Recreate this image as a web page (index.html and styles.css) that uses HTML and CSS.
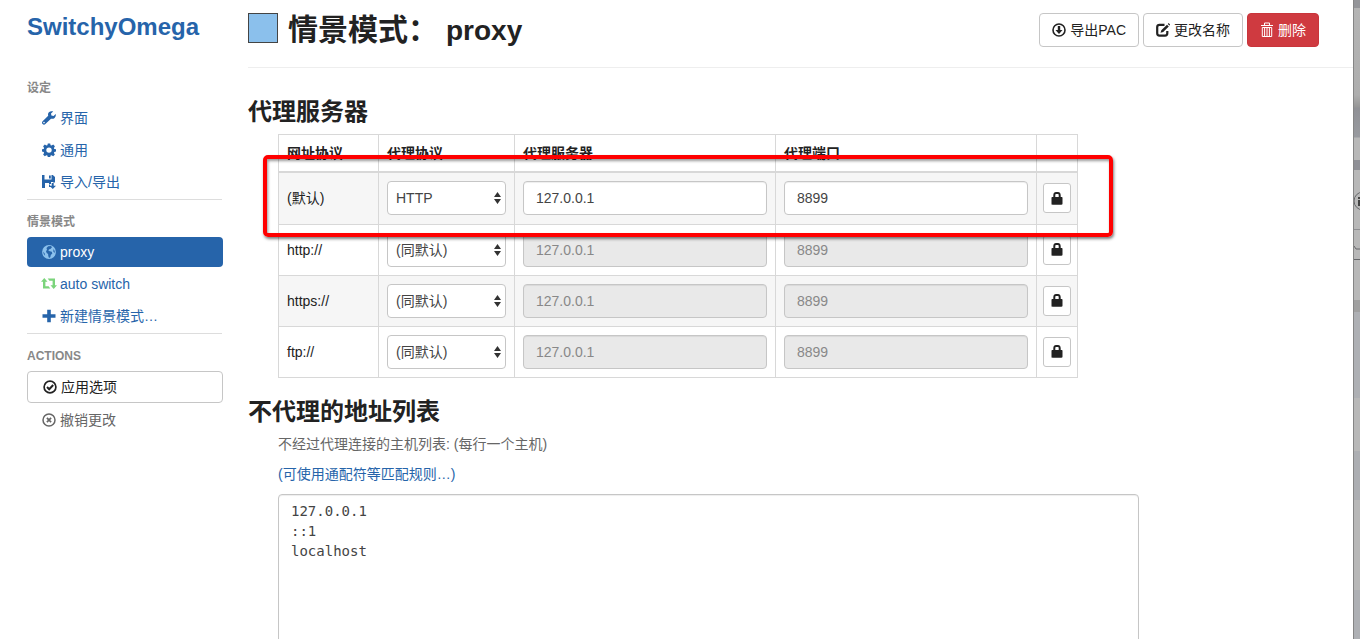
FILE: index.html
```html
<!DOCTYPE html>
<html lang="zh-CN">
<head>
<meta charset="UTF-8">
<meta name="viewport" content="width=device-width, initial-scale=1">
<title>SwitchyOmega</title>
<link rel="stylesheet" href="styles.css">
</head>
<body>

<svg class="sprite" aria-hidden="true">
  <symbol id="i-wrench" viewBox="0 0 14 14"><path d="M13.7 3.1 11.6 5 9.4 4.5 9 2.6 11.2.5C9.7-.2 8 .1 6.9 1.3c-.9 1-1.1 2.3-.7 3.5L.6 10.300c-.8.8-.8 2 0 2.800.8.8 2 .8 2.800 0L9 7.700c1.200.4 2.600.1 3.600-.8 1.100-1.100 1.500-2.500 1.100-3.800zM2 12.400a.8.8 0 1 1 0-1.600.8.8 0 0 1 0 1.600z"/></symbol>
  <symbol id="i-cog" viewBox="0 0 14 14"><path fill-rule="evenodd" d="M5.800.4h2.400l.4 1.800 1 .4 1.600-1 1.700 1.700-1 1.600.4 1 1.700.4v2.200l-1.700.4-.4 1 1 1.600-1.700 1.700-1.600-1-1 .4-.4 1.600H5.800l-.4-1.600-1-.4-1.600 1-1.700-1.700 1-1.600-.4-1L0 8.500V6.300l1.700-.4.4-1-1-1.600 1.700-1.700 1.600 1 1-.4zM7 4.400a2.700 2.700 0 1 0 0 5.400 2.700 2.700 0 0 0 0-5.400z"/></symbol>
  <symbol id="i-save" viewBox="0 0 14 14"><path d="M0 0h2.500v4.500h7V0h1.300L13 2v5.500h-2V7H9v2H7.200l1 1.500V12H7V8H3v5H0zM7 .5h1.800v3H7zM9.700 8h2v2.800H14L10.800 14 7.500 10.800h2.200z"/></symbol>
  <symbol id="i-globe" viewBox="0 0 14 14"><circle cx="7" cy="7" r="6.900"/><path fill="#2664aa" d="M6.200 1.200 9 1l1 1.200-1.600 1.900-1.200.2-.9 1.300 1.500.7 2 .5.500 1.600-1.500 1.600-.5 2.300-1.300.6-.7-2-.2-1.900-1.400-1L4 6.300l1-1.600L4.500 3zM11.400 4l1.300 2v2l-1.300-1.300zM1.200 6.500l1.500 2 .4 2.200L1.700 9z"/></symbol>
  <symbol id="i-retweet" viewBox="0 0 16 14"><path d="M3.300 1 6.500 4.800H4.400v4.400h3.200L9.300 11.500H2V4.800H0zM6.700 1.500H14v6.700h2L12.700 12 9.500 8.200h2.100V3.800H8.400z"/></symbol>
  <symbol id="i-plus" viewBox="0 0 14 14"><path d="M5.200.7h3.600v4.500h4.700v3.600H8.800v4.500H5.200V8.800H.5V5.200h4.700z"/></symbol>
  <symbol id="i-ok" viewBox="0 0 14 14"><g fill="none" stroke="currentColor"><circle cx="7" cy="7" r="5.900" stroke-width="1.700"/><path d="m4 7 2.200 2.200L10.200 5" stroke-width="2"/></g></symbol>
  <symbol id="i-remove" viewBox="0 0 14 14"><g fill="none" stroke="currentColor"><circle cx="7" cy="7" r="6" stroke-width="1.500"/><path d="m4.900 4.900 4.200 4.200m0-4.200L4.900 9.100" stroke-width="1.700"/></g></symbol>
  <symbol id="i-download" viewBox="0 0 14 14"><circle cx="7" cy="7" r="6" fill="none" stroke="currentColor" stroke-width="1.600"/><path d="M5.800 3h2.400v4h2.300L7 11 3.500 7h2.300z"/></symbol>
  <symbol id="i-edit" viewBox="0 0 14 14"><path d="M8.500 1.800H3.500A2.300 2.300 0 0 0 1.200 4v6.300a2.300 2.300 0 0 0 2.300 2.300H9a2.300 2.300 0 0 0 2.300-2.300V8" fill="none" stroke="currentColor" stroke-width="2.200"/><path d="M11 1.800 12.800 3.500 7.200 9 4.500 9.800 5.300 7.200zM11.800 1l.9-.9 1.500 1.600-.8.900z"/></symbol>
  <symbol id="i-trash" viewBox="0 0 14 16"><path fill="none" stroke="currentColor" d="M1 3.500h12M4.500 3V1h5v2M2.300 5.500V14.500h9.400V5.500zM4.600 6v8M7 6v8M9.400 6v8"/></symbol>
  <symbol id="i-lock" viewBox="0 0 12 13"><path fill-rule="evenodd" d="M2.300 5V3.200C2.300 1.200 3.500 0 5 0h2c1.500 0 2.700 1.200 2.700 3.200V5h.8c.8 0 1 .4 1 1v5.500c0 .8-.4 1.200-1 1.200h-9c-.7 0-1-.4-1-1.200V6c0-.6.300-1 1-1zM4.300 5h3.400V3.300C7.700 2.500 7.400 2 6.700 2H5.300c-.7 0-1 .5-1 1.300z"/></symbol>
</svg>

<div class="app">
  <nav class="sidebar">
    <h1 class="brand">SwitchyOmega</h1>
    <ul class="nav">
      <li class="nav-header">设定</li>
      <li><a href="#ui"><svg class="icon"><use href="#i-wrench"/></svg>界面</a></li>
      <li><a href="#general"><svg class="icon"><use href="#i-cog"/></svg>通用</a></li>
      <li><a href="#io"><svg class="icon"><use href="#i-save"/></svg>导入/导出</a></li>
      <li class="divider"></li>
      <li class="nav-header">情景模式</li>
      <li class="active"><a href="#proxy"><svg class="icon icon-blue"><use href="#i-globe"/></svg>proxy</a></li>
      <li><a href="#auto-switch"><svg class="icon icon-green"><use href="#i-retweet"/></svg>auto switch</a></li>
      <li><a href="#new-profile"><svg class="icon"><use href="#i-plus"/></svg>新建情景模式…</a></li>
      <li class="divider"></li>
      <li class="nav-header">ACTIONS</li>
      <li><button type="button" class="btn btn-apply"><svg class="icon"><use href="#i-ok"/></svg>应用选项</button></li>
      <li class="muted"><a href="#discard"><svg class="icon"><use href="#i-remove"/></svg>撤销更改</a></li>
    </ul>
  </nav>

  <main class="content">
    <header class="page-header">
      <span class="color-box"></span>
      <h2 class="title">情景模式：<span class="profile-name">proxy</span></h2>
      <div class="actions">
        <button type="button" class="btn"><svg class="icon"><use href="#i-download"/></svg>导出PAC</button>
        <button type="button" class="btn"><svg class="icon"><use href="#i-edit"/></svg>更改名称</button>
        <button type="button" class="btn btn-danger"><svg class="icon icon-trash"><use href="#i-trash"/></svg>删除</button>
      </div>
    </header>

    <section>
      <h3>代理服务器</h3>
      <div class="servers">
        <table>
          <thead>
            <tr>
              <th class="col-scheme">网址协议</th>
              <th class="col-protocol">代理协议</th>
              <th>代理服务器</th>
              <th>代理端口</th>
              <th class="col-auth"></th>
            </tr>
          </thead>
          <tbody>
            <tr>
              <td>(默认)</td>
              <td><div class="select"><select aria-label="代理协议"><option>HTTP</option></select><svg viewBox="0 0 7 12"><path d="M3.500 0 7 5H0zM0 7h7L3.500 12z"/></svg></div></td>
              <td><input type="text" class="field" aria-label="代理服务器" value="127.0.0.1"></td>
              <td><input type="text" class="field" aria-label="代理端口" value="8899"></td>
              <td><button type="button" class="btn btn-lock" aria-label="代理登录"><svg><use href="#i-lock"/></svg></button></td>
            </tr>
            <tr>
              <td>http://</td>
              <td><div class="select"><select aria-label="代理协议"><option>(同默认)</option></select><svg viewBox="0 0 7 12"><path d="M3.500 0 7 5H0zM0 7h7L3.500 12z"/></svg></div></td>
              <td><input type="text" class="field" aria-label="代理服务器" value="127.0.0.1" disabled></td>
              <td><input type="text" class="field" aria-label="代理端口" value="8899" disabled></td>
              <td><button type="button" class="btn btn-lock" aria-label="代理登录"><svg><use href="#i-lock"/></svg></button></td>
            </tr>
            <tr>
              <td>https://</td>
              <td><div class="select"><select aria-label="代理协议"><option>(同默认)</option></select><svg viewBox="0 0 7 12"><path d="M3.500 0 7 5H0zM0 7h7L3.500 12z"/></svg></div></td>
              <td><input type="text" class="field" aria-label="代理服务器" value="127.0.0.1" disabled></td>
              <td><input type="text" class="field" aria-label="代理端口" value="8899" disabled></td>
              <td><button type="button" class="btn btn-lock" aria-label="代理登录"><svg><use href="#i-lock"/></svg></button></td>
            </tr>
            <tr>
              <td>ftp://</td>
              <td><div class="select"><select aria-label="代理协议"><option>(同默认)</option></select><svg viewBox="0 0 7 12"><path d="M3.500 0 7 5H0zM0 7h7L3.500 12z"/></svg></div></td>
              <td><input type="text" class="field" aria-label="代理服务器" value="127.0.0.1" disabled></td>
              <td><input type="text" class="field" aria-label="代理端口" value="8899" disabled></td>
              <td><button type="button" class="btn btn-lock" aria-label="代理登录"><svg><use href="#i-lock"/></svg></button></td>
            </tr>
          </tbody>
        </table>
        <div class="highlight"></div>
      </div>
    </section>

    <section>
      <h3>不代理的地址列表</h3>
      <div class="bypass">
        <label class="help" for="bypassList">不经过代理连接的主机列表: (每行一个主机)</label>
        <p><a href="#rules">(可使用通配符等匹配规则…)</a></p>
        <textarea id="bypassList" rows="10" spellcheck="false">127.0.0.1
::1
localhost</textarea>
      </div>
    </section>
  </main>

  <div class="backdrop">
    <svg class="backdrop-lines"><g fill="none" stroke="#66676a"><circle cx="9" cy="201" r="9"/><path d="M0 229.500h6" stroke="#8f8f92"/><path d="M0 246l2 3h4M0 259.500h6"/></g><path fill="#444" d="M4 197h2v2H4zM4 200h2v6H4z"/></svg>
  </div>
</div>

</body>
</html>
```
FILE: styles.css
```css
* {
  box-sizing: border-box;
}

html, body {
  height: 100%;
  margin: 0;
  overflow: hidden;
}

body {
  font: 14px/20px "Liberation Sans", "Noto Sans CJK SC", sans-serif;
  color: #222;
  background: #fff;
}

a {
  color: #2664aa;
  text-decoration: none;
}

h1, h2, h3, p, ul {
  margin: 0;
  padding: 0;
}

svg {
  fill: currentColor;
}

.sprite {
  display: none;
}

.app {
  display: flex;
  height: 100%;
}

/* sidebar */
.sidebar {
  flex: none;
  width: 248px;
  padding: 12px 25px 0 27px;
}

.brand {
  font-size: 24px;
  line-height: 30px;
  color: #2664aa;
  margin-bottom: 31px;
}

.nav {
  list-style: none;
}

.nav-header {
  padding: 5px 0;
  font-size: 12px;
  font-weight: bold;
  color: #888;
}

.nav a {
  display: flex;
  align-items: center;
  height: 30px;
  margin-bottom: 2px;
  padding: 0 15px;
  border-radius: 4px;
}

.nav .active a {
  background: #2664aa;
  color: #fff;
}

.nav .muted a {
  color: #666;
}

.divider {
  height: 1px;
  margin: 0 1px 7px 0;
  background: #ddd;
}

.icon {
  flex: none;
  width: 14px;
  height: 14px;
  margin-right: 4px;
}

.nav .icon-blue {
  color: #8bc0ec;
}

.nav .icon-green {
  width: 16px;
  margin: 0 3px 0 -1px;
  color: #7bd47b;
}

/* buttons */
.btn {
  display: inline-flex;
  align-items: center;
  height: 34px;
  padding: 0 12px;
  border: 1px solid #c6c6c6;
  border-radius: 4px;
  background: #fff;
  color: #222;
  font: inherit;
}

.btn-danger {
  border-color: #c9353b;
  background: #cf3a40;
  color: #fff;
}

.icon-trash {
  height: 16px;
}

.btn-apply {
  width: 100%;
  height: 32px;
  margin-bottom: 2px;
  padding: 0 15px;
}

.btn-lock {
  justify-content: center;
  width: 28px;
  height: 30px;
  padding: 0;
  border-radius: 3px;
  vertical-align: middle;
}

.btn-lock svg {
  width: 12px;
  height: 13px;
}

/* content */
.content {
  flex: 1;
  min-width: 0;
}

.page-header {
  display: flex;
  align-items: flex-start;
  height: 68px;
  padding: 13px 34px 0 0;
  margin-bottom: 30px;
  border-bottom: 1px solid #eee;
}

.color-box {
  width: 30px;
  height: 30px;
  margin-right: 10px;
  border: 1px solid #444;
  background: #8bc0ec;
}

.title {
  font-size: 30px;
  line-height: 34px;
  font-weight: bold;
}

.profile-name {
  margin-left: 8px;
  font-size: 28px;
}

.actions {
  display: flex;
  gap: 4px;
  margin-left: auto;
}

h3 {
  font-size: 24px;
  line-height: 28px;
  font-weight: bold;
  margin-bottom: 8px;
}

.servers {
  position: relative;
  max-width: 800px;
  margin: 0 30px 20px;
}

table {
  width: 100%;
  table-layout: fixed;
  border-collapse: collapse;
}

th, td {
  padding: 8px;
  border: 1px solid #d8d8d8;
  text-align: left;
}

td {
  height: 51px;
}

th {
  border-bottom-width: 2px;
}

tbody tr:first-child td {
  height: 52px;
}

tbody tr:nth-child(odd) {
  background: #f6f6f6;
}

.col-scheme {
  width: 100px;
}

.col-protocol {
  width: 136px;
}

.col-auth {
  width: 41px;
}

td:last-child {
  padding: 0 6px;
}

.field, select, textarea {
  display: block;
  width: 100%;
  height: 34px;
  padding: 6px 12px;
  border: 1px solid #c6c6c6;
  border-radius: 4px;
  background: #fff;
  color: #444;
  font: inherit;
  box-shadow: inset 0 1px 1px rgba(0, 0, 0, 0.07);
}

.field:disabled {
  background: #e9e9e9;
  color: #888;
}

.select {
  position: relative;
}

select {
  appearance: none;
  padding: 0 8px;
  box-shadow: none;
}

.select svg {
  position: absolute;
  top: 11px;
  right: 5px;
  width: 7px;
  height: 12px;
  color: #333;
}

/* red frame around the default row */
.highlight {
  position: absolute;
  top: 21px;
  left: -15px;
  right: -35px;
  height: 82px;
  border: 4px solid #f00;
  border-radius: 5px;
  box-shadow: 1px 2px 3px rgba(0, 0, 0, 0.5), inset 1px 2px 3px rgba(0, 0, 0, 0.4);
  pointer-events: none;
}

.bypass {
  max-width: 891px;
  padding-left: 30px;
}

.help {
  display: block;
  margin-bottom: 10px;
  color: #666;
}

.bypass p {
  margin-bottom: 10px;
}

textarea {
  height: auto;
  font-family: "DejaVu Sans Mono", monospace;
  resize: none;
}

/* dimmed window behind the page */
.backdrop {
  flex: none;
  width: 7px;
  border-left: 1px solid #858585;
  background: linear-gradient(#949599 8px, #b4b4b4 8px, #aeaeae 95px, #969696 107px, #909196 108px, #989a9f 137px, #b8b8b8 138px 160px, #8f9096 160px 170px, #b8b8b8 170px 300px, #a0a0a0 300px 312px, #aeb0b4 312px 398px, #b8b8b8 398px 451px, #acaeb2 451px 500px, #b8b8b8 500px 590px, #aeb0b4 590px);
}

.backdrop-lines {
  display: block;
  width: 6px;
  height: 300px;
}
```
